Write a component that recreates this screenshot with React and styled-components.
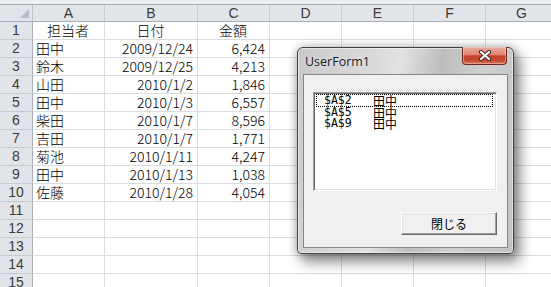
import React from 'react';
import styled, { createGlobalStyle } from 'styled-components';

const GlobalStyle = createGlobalStyle`
  html, body {
    margin: 0;
    padding: 0;
    background: #fff;
    overflow: hidden;
  }
  body {
    width: 551px;
    height: 287px;
    position: relative;
    font-family: "Noto Sans CJK JP", "Liberation Sans", sans-serif;
  }
`;

const COLS = [33, 72, 93, 72, 72, 72, 72, 72];

const Screen = styled.div`
  position: relative;
  width: 551px;
  height: 287px;
  overflow: hidden;
`;

const TopBand = styled.div`
  height: 4px;
  background: #eceef1;
  border-bottom: 1px solid #a9b0ba;
`;

const Grid = styled.div`
  display: grid;
  grid-template-columns: ${COLS.map((w) => w + 'px').join(' ')};
  grid-template-rows: 17px;
  grid-auto-rows: 18px;
  width: 558px;
`;

const Corner = styled.div`
  position: relative;
  background: #e1e4e8;
  border-right: 1px solid #bcc2ca;
  border-bottom: 1px solid #a9b0ba;
  box-sizing: border-box;

  &::after {
    content: '';
    position: absolute;
    right: 3px;
    bottom: 3px;
    border-style: solid;
    border-width: 0 0 9px 9px;
    border-color: transparent transparent #b7bdc5 transparent;
  }
`;

const ColHeader = styled.div`
  background: #e1e4e8;
  border-right: 1px solid #c6cbd2;
  border-bottom: 1px solid #a9b0ba;
  box-sizing: border-box;
  display: flex;
  align-items: center;
  justify-content: center;
  font-family: "Liberation Sans", sans-serif;
  font-size: 14px;
  line-height: 16px;
  color: #3c3c3c;
`;

const RowHeader = styled.div`
  background: #e1e4e8;
  border-right: 1px solid #a9b0ba;
  border-bottom: 1px solid #c6cbd2;
  box-sizing: border-box;
  display: flex;
  align-items: center;
  justify-content: center;
  font-family: "Liberation Sans", sans-serif;
  font-size: 14px;
  line-height: 17px;
  color: #3c3c3c;
`;

const Cell = styled.div`
  border-right: 1px solid #dadcdd;
  border-bottom: 1px solid #dadcdd;
  box-sizing: border-box;
  display: flex;
  align-items: center;
  justify-content: ${(p) => (p.$align === 'right' ? 'flex-end' : p.$align === 'center' ? 'center' : 'flex-start')};
  padding: 0 4px 0 3px;
  font-size: 14px;
  font-weight: 300;
  line-height: 17px;
  color: #000;
  white-space: nowrap;
`;

const Window = styled.div`
  position: absolute;
  left: 297px;
  top: 47px;
  width: 217px;
  height: 207px;
  box-sizing: border-box;
  border: 1px solid #3f3f3f;
  border-radius: 6px 6px 4px 4px;
  padding: 0 5px 5px 5px;
  display: flex;
  flex-direction: column;
  background: linear-gradient(100deg, #c9c9c9 0%, #d9d9d9 30%, #e2e2e2 42%, #bdbdbd 58%, #cfcfcf 75%, #c2c2c2 100%);
  box-shadow: inset 0 0 0 1px rgba(255, 255, 255, 0.55), 0 0 8px 1px rgba(0, 0, 0, 0.2), 5px 7px 14px 1px rgba(0, 0, 0, 0.45);
`;

const TitleBar = styled.div`
  height: 26px;
  display: flex;
  align-items: flex-start;
  justify-content: space-between;
`;

const Title = styled.span`
  align-self: center;
  padding-left: 2px;
  font-family: "Open Sans", "Liberation Sans", sans-serif;
  font-size: 12.5px;
  color: #1a1a2a;
  text-shadow: 0 0 6px rgba(255, 255, 255, 0.8);
`;

const CloseButton = styled.div`
  width: 45px;
  height: 18px;
  margin-top: -1px;
  margin-right: 1px;
  box-sizing: border-box;
  border: 1px solid #6e2a1e;
  border-top: none;
  border-radius: 0 0 4px 4px;
  background: linear-gradient(#e9ada1 0%, #dc8573 45%, #c5432c 52%, #c44a31 78%, #d97458 100%);
  box-shadow: inset 0 0 0 1px rgba(255, 220, 210, 0.45);
  display: flex;
  align-items: center;
  justify-content: center;
`;

const Client = styled.div`
  flex: 1;
  box-sizing: border-box;
  border: 1px solid #858585;
  background: #f0f0f0;
  padding: 17px 10px 12px 9px;
  display: flex;
  flex-direction: column;
  align-items: flex-start;
`;

const ListBox = styled.div`
  width: 184px;
  height: 99px;
  box-sizing: border-box;
  background: #fff;
  border-style: solid;
  border-width: 1px;
  border-color: #a0a0a0 #fff #fff #a0a0a0;
  box-shadow: inset 1px 1px 0 #696969, inset -1px -1px 0 #e3e3e3;
  padding: 1px 3px 1px 2px;
  display: flex;
  flex-direction: column;
`;

const ListItem = styled.div`
  display: flex;
  flex: none;
  height: ${(p) => (p.$focused ? '13px' : '11px')};
  box-sizing: border-box;
  border-style: dotted;
  border-color: ${(p) => (p.$focused ? '#000' : 'transparent')};
  border-width: ${(p) => (p.$focused ? '1px' : '0 1px')};
  align-items: center;
  padding-left: 7px;
  color: #000;
  line-height: 11px;
`;

const ItemCode = styled.span`
  width: 49px;
  font-family: "DejaVu Sans Mono", "Liberation Mono", monospace;
  font-size: 11.5px;
  line-height: 11px;
  color: #000;
`;

const ItemName = styled.span`
  font-family: "Noto Sans CJK JP", sans-serif;
  font-size: 12px;
  line-height: 11px;
  color: #000;
`;

const PushButton = styled.div`
  align-self: flex-end;
  margin-top: 21px;
  width: 96px;
  height: 23px;
  box-sizing: border-box;
  border-style: solid;
  border-width: 1px;
  border-color: #fff #696969 #696969 #fff;
  box-shadow: inset -1px -1px 0 #a0a0a0, inset 1px 1px 0 #e3e3e3;
  background: #f0f0f0;
  display: flex;
  align-items: center;
  justify-content: center;
  font-size: 12px;
  line-height: 16px;
  color: #000;
`;

const HEADER_ROW = ['担当者', '日付', '金額'];

const DATA = [
  ['田中', '2009/12/24', '6,424'],
  ['鈴木', '2009/12/25', '4,213'],
  ['山田', '2010/1/2', '1,846'],
  ['田中', '2010/1/3', '6,557'],
  ['柴田', '2010/1/7', '8,596'],
  ['吉田', '2010/1/7', '1,771'],
  ['菊池', '2010/1/11', '4,247'],
  ['田中', '2010/1/13', '1,038'],
  ['佐藤', '2010/1/28', '4,054'],
];

const LIST = [
  ['$A$2', '田中'],
  ['$A$5', '田中'],
  ['$A$9', '田中'],
];

const LETTERS = ['A', 'B', 'C', 'D', 'E', 'F', 'G'];

const CloseIcon = () => (
  <svg width="14" height="11" viewBox="0 0 14 11">
    <path d="M3 2 L11 9 M11 2 L3 9" stroke="#4a2a26" strokeWidth="4.2" strokeLinecap="round" fill="none" />
    <path d="M3 2 L11 9 M11 2 L3 9" stroke="#fff" strokeWidth="2.2" strokeLinecap="round" fill="none" />
  </svg>
);

const rowCells = (rowIndex) => {
  if (rowIndex === 1) {
    return HEADER_ROW.map((t, i) => (
      <Cell key={i} $align="center">{t}</Cell>
    ));
  }
  const d = DATA[rowIndex - 2];
  if (!d) return [0, 1, 2].map((i) => <Cell key={i} />);
  return [
    <Cell key={0}>{d[0]}</Cell>,
    <Cell key={1} $align="right">{d[1]}</Cell>,
    <Cell key={2} $align="right">{d[2]}</Cell>,
  ];
};

export default function App() {
  const rows = Array.from({ length: 15 }, (_, i) => i + 1);
  return (
    <>
      <GlobalStyle />
      <Screen>
        <TopBand />
        <Grid>
          <Corner />
          {LETTERS.map((l) => (
            <ColHeader key={l}>{l}</ColHeader>
          ))}
          {rows.map((r) => (
            <React.Fragment key={r}>
              <RowHeader>{r}</RowHeader>
              {rowCells(r)}
              {[3, 4, 5, 6].map((c) => (
                <Cell key={c} />
              ))}
            </React.Fragment>
          ))}
        </Grid>

        <Window>
          <TitleBar>
            <Title>UserForm1</Title>
            <CloseButton>
              <CloseIcon />
            </CloseButton>
          </TitleBar>
          <Client>
            <ListBox>
              {LIST.map(([code, name], i) => (
                <ListItem key={code} $focused={i === 0}>
                  <ItemCode>{code}</ItemCode>
                  <ItemName>{name}</ItemName>
                </ListItem>
              ))}
            </ListBox>
            <PushButton>閉じる</PushButton>
          </Client>
        </Window>
      </Screen>
    </>
  );
}
